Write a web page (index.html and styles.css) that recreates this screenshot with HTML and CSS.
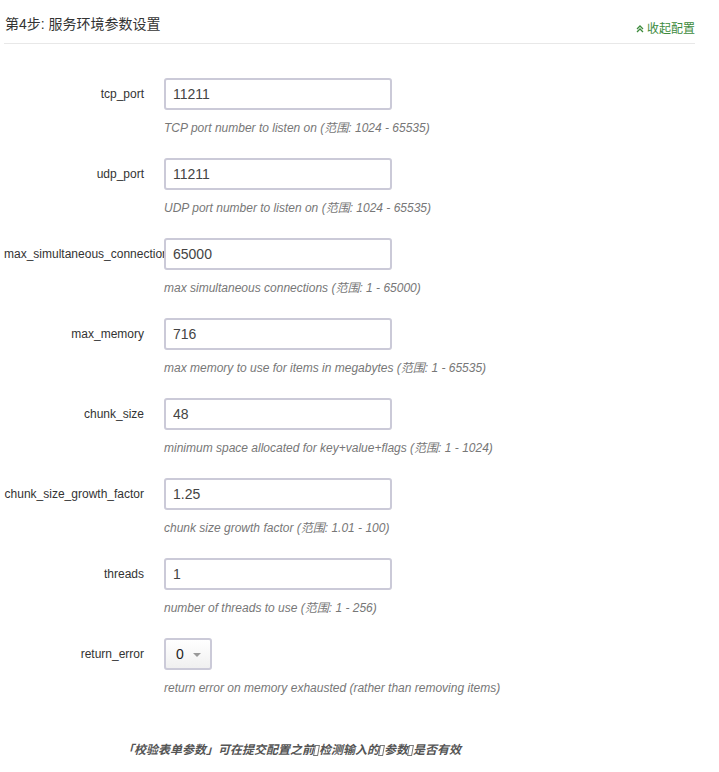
FILE: index.html
```html
<!DOCTYPE html>
<html lang="zh">
<head>
<meta charset="utf-8">
<title>第4步: 服务环境参数设置</title>
<link rel="stylesheet" href="styles.css">
</head>
<body>
<div class="panel">
  <div class="header">
    <h3 class="title">第4步: 服务环境参数设置</h3>
    <a class="collapse" href="#"><svg class="chev" width="8" height="8" viewBox="0 0 8 8"><path d="M1 4 L4 1 L7 4 M1 7 L4 4 L7 7" fill="none" stroke="currentColor" stroke-width="1.3"/></svg>收起配置</a>
  </div>
  <form class="form">
    <div class="row">
      <label class="label">tcp_port</label>
      <div class="field">
        <input class="input" type="text" value="11211">
        <p class="help">TCP port number to listen on (范围: 1024 - 65535)</p>
      </div>
    </div>
    <div class="row">
      <label class="label">udp_port</label>
      <div class="field">
        <input class="input" type="text" value="11211">
        <p class="help">UDP port number to listen on (范围: 1024 - 65535)</p>
      </div>
    </div>
    <div class="row">
      <label class="label">max_simultaneous_connections</label>
      <div class="field">
        <input class="input" type="text" value="65000">
        <p class="help">max simultaneous connections (范围: 1 - 65000)</p>
      </div>
    </div>
    <div class="row">
      <label class="label">max_memory</label>
      <div class="field">
        <input class="input" type="text" value="716">
        <p class="help">max memory to use for items in megabytes (范围: 1 - 65535)</p>
      </div>
    </div>
    <div class="row">
      <label class="label">chunk_size</label>
      <div class="field">
        <input class="input" type="text" value="48">
        <p class="help">minimum space allocated for key+value+flags (范围: 1 - 1024)</p>
      </div>
    </div>
    <div class="row">
      <label class="label">chunk_size_growth_factor</label>
      <div class="field">
        <input class="input" type="text" value="1.25">
        <p class="help">chunk size growth factor (范围: 1.01 - 100)</p>
      </div>
    </div>
    <div class="row">
      <label class="label">threads</label>
      <div class="field">
        <input class="input" type="text" value="1">
        <p class="help">number of threads to use (范围: 1 - 256)</p>
      </div>
    </div>
    <div class="row">
      <label class="label">return_error</label>
      <div class="field">
        <div class="select"><span class="sel-val">0</span><span class="caret"></span></div>
        <p class="help">return error on memory exhausted (rather than removing items)</p>
      </div>
    </div>
  </form>
  <p class="note">「校验表单参数」可在提交配置之前<span class="tofu"></span>检测输入的<span class="tofu"></span>参数<span class="tofu"></span>是否有效</p>
</div>
</body>
</html>
```
FILE: styles.css
```css
html, body {
  margin: 0;
  padding: 0;
  background: #fff;
}
body {
  font-family: "Liberation Sans", Arial, "Noto Sans CJK SC", sans-serif;
  color: #333;
}
.panel {
  padding: 0 24px 0 4px;
}
.header {
  display: flex;
  justify-content: space-between;
  align-items: flex-end;
  border-bottom: 1px solid #e8e8e8;
  height: 44px;
  box-sizing: border-box;
}
.title {
  margin: 0;
  font-size: 14px;
  font-weight: normal;
  color: #333;
  line-height: 20px;
  align-self: flex-start;
  padding-top: 14px;
  padding-left: 1px;
}
.collapse {
  color: #3d8b3d;
  font-size: 12px;
  text-decoration: none;
  line-height: 16px;
  padding-bottom: 6px;
  display: flex;
  align-items: center;
  gap: 3px;
}
.chev {
  display: block;
}
.form {
  padding-top: 34px;
}
.row {
  display: flex;
  align-items: flex-start;
  height: 80px;
}
.label {
  width: 160px;
  flex: none;
  box-sizing: border-box;
  padding-right: 20px;
  text-align: right;
  font-size: 12px;
  line-height: 32px;
  white-space: nowrap;
  overflow: hidden;
  color: #333;
}
.field {
  display: flex;
  flex-direction: column;
}
.input {
  box-sizing: border-box;
  width: 228px;
  height: 32px;
  border: 2px solid #cbcad8;
  border-radius: 3px;
  padding: 0 7px;
  margin: 0;
  font-family: "Liberation Sans", Arial, sans-serif;
  font-size: 14px;
  color: #444;
  background: #fff;
  outline: none;
}
.help {
  margin: 10px 0 0;
  font-size: 12px;
  line-height: 16px;
  font-style: italic;
  color: #777;
}
.select {
  box-sizing: border-box;
  width: 48px;
  height: 32px;
  border: 2px solid #cbcad8;
  border-radius: 3px;
  background: linear-gradient(#ffffff, #f0f0f0);
  display: flex;
  align-items: center;
  padding-left: 10px;
  gap: 9px;
  font-size: 14px;
  color: #222;
}
.caret {
  width: 0;
  height: 0;
  border-left: 4px solid transparent;
  border-right: 4px solid transparent;
  border-top: 4px solid #999;
  margin-top: 1px;
}
.note {
  margin: 24px 0 0 118px;
  font-size: 12px;
  font-style: italic;
  font-weight: bold;
  color: #555;
  line-height: 16px;
}
.tofu {
  display: inline-block;
  width: 5px;
  height: 11px;
  border: 1px solid #777;
  box-sizing: border-box;
  vertical-align: -2px;
  margin: 0;
  transform: skewX(-10deg);
}
```
